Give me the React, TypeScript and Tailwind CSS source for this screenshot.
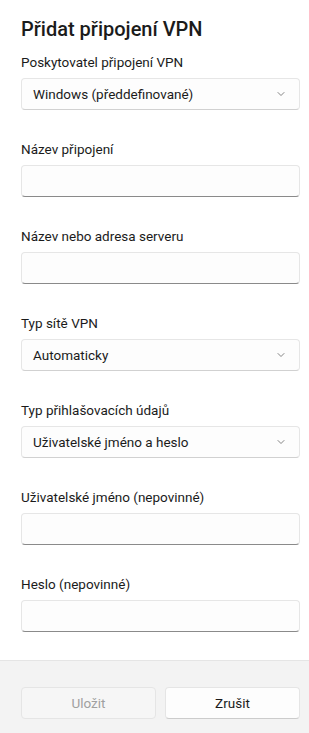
import { ChevronDown } from "lucide-react";

const fields = [
  { label: "Poskytovatel připojení VPN", kind: "select", value: "Windows (předdefinované)" },
  { label: "Název připojení", kind: "input" },
  { label: "Název nebo adresa serveru", kind: "input" },
  { label: "Typ sítě VPN", kind: "select", value: "Automaticky" },
  { label: "Typ přihlašovacích údajů", kind: "select", value: "Uživatelské jméno a heslo" },
  { label: "Uživatelské jméno (nepovinné)", kind: "input" },
  { label: "Heslo (nepovinné)", kind: "input" },
];

const Field = ({ label, kind, value }: { label: string; kind: string; value?: string }) => (
  <div className="flex flex-col">
    <div className="text-[13.5px] leading-5 text-[#1b1b1b]">{label}</div>
    {kind === "select" ? (
      <div className="mt-[6px] flex h-8 items-center justify-between rounded-[4px] border border-[#e6e6e6] border-b-[#d1d1d1] bg-[#fdfdfd] pl-[11px] pr-[12px]">
        <span className="text-[13.5px] text-[#1b1b1b]">{value}</span>
        <ChevronDown className="h-3 w-3 text-[#5c5c5c]" strokeWidth={1.5} />
      </div>
    ) : (
      <div className="mt-[6px] h-8 rounded-[4px] border border-[#e6e6e6] border-b-[#8a8a8a] bg-[#fdfdfd]" />
    )}
  </div>
);

export default function App() {
  return (
    <div
      className="flex h-[733px] w-[309px] flex-col overflow-hidden bg-white"
      style={{ fontFamily: '"Segoe UI", Roboto, "Noto Sans", sans-serif' }}
    >
      <div className="flex-1 pl-[21px] pr-[9px] pt-[15px]">
        <h1 className="text-[20px] font-medium leading-7 text-[#1b1b1b]">Přidat připojení VPN</h1>
        <div className="mt-[9px] flex flex-col gap-[29px]">
          {fields.map((f) => (
            <Field key={f.label} {...f} />
          ))}
        </div>
      </div>
      <div className="flex h-[73px] gap-[9px] border-t border-[#e5e5e5] bg-[#f3f3f3] pl-[21px] pr-[9px] pt-[26px]">
        <button className="h-8 flex-1 rounded-[4px] border border-[#e5e5e5] bg-[#f6f6f6] text-[13.5px] text-[#a0a0a0]">
          Uložit
        </button>
        <button className="h-8 flex-1 rounded-[4px] border border-[#e5e5e5] border-b-[#cccccc] bg-[#fdfdfd] text-[13.5px] text-[#1b1b1b]">
          Zrušit
        </button>
      </div>
    </div>
  );
}
